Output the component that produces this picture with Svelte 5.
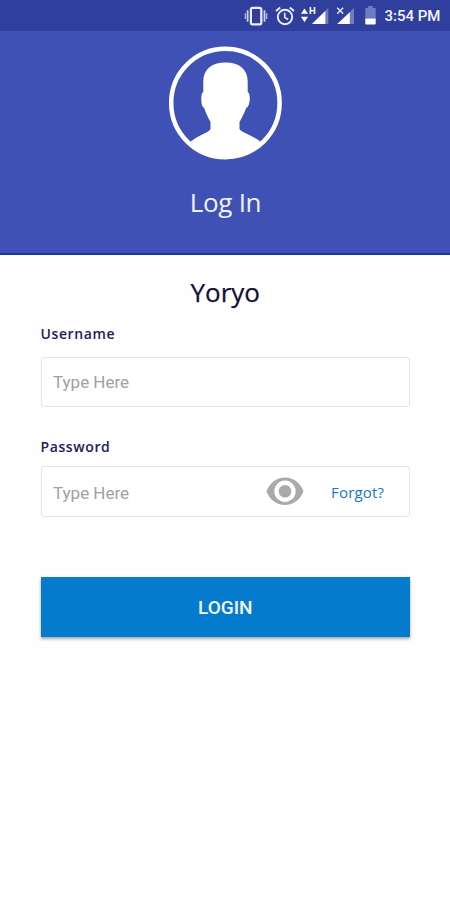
<script>
  let username = $state('');
  let password = $state('');
  let visible = $state(false);
</script>

<div class="screen">
  <div class="status">
    <svg class="vibrate" width="24" height="20" viewBox="0 0 24 20">
      <rect x="6.900" y="1.900" width="10.400" height="16.400" rx="1.600" fill="none" stroke="#eef0ff" stroke-width="2.200" />
      <path d="M3.600 4.200v11.600M20.500 4.200v11.600" stroke="#c9cff0" stroke-width="1.800" />
      <path d="M1.400 7.200v5.800M22.600 7.200v5.800" stroke="#aab2e2" stroke-width="1.400" />
    </svg>
    <svg class="alarm" width="20" height="20" viewBox="0 0 20 20" fill="none" stroke="#eef0ff">
      <circle cx="10" cy="11" r="7.200" stroke-width="1.900" />
      <path d="M9.700 6.700v4.700l3.500 2.100" stroke-width="1.500" />
      <path d="M1 5.100l4.200-3.500M19 5.100l-4.200-3.500" stroke-width="1.900" />
    </svg>
    <svg class="signal" width="28" height="19" viewBox="0 0 28 19">
      <path d="M0 7.700L3.500 2.400L7 7.700zM0 10.700L3.500 16.200L7 10.700z" fill="#fff" />
      <path d="M27.300 1.800V18H11z" fill="#6f7bc6" />
      <path d="M24.300 5V18H11z" fill="#fff" />
      <text x="7.900" y="8.200" fill="#fff" font-family="Roboto, sans-serif" font-size="9.500" font-weight="700">H</text>
    </svg>
    <svg class="nosignal" width="19" height="19" viewBox="0 0 19 19">
      <path d="M18 1.800V18H1.800z" fill="#6f7bc6" />
      <path d="M13.800 6.200V18H1.200z" fill="#fff" />
      <path d="M1.200 1.800l6 6M7.200 1.800l-6 6" stroke="#303f9f" stroke-width="3" />
      <path d="M1.200 1.800l6 6M7.200 1.800l-6 6" stroke="#e8ebff" stroke-width="1.400" />
    </svg>
    <svg class="battery" width="11" height="19" viewBox="0 0 11 19">
      <path d="M3.200 0h4.600v2h1.900q1 0 1 1v9.500H.3V3q0-1 1-1h1.900z" fill="#6f7bc0" />
      <path d="M.3 12.500h10.400v5.100q0 1-1 1H1.300q-1 0-1-1z" fill="#fff" />
    </svg>
    <span class="clock">3:54 PM</span>
  </div>

  <header>
    <svg width="114" height="114" viewBox="0 0 114 114">
      <circle cx="57.400" cy="57" r="54.200" fill="none" stroke="#fff" stroke-width="4.500" />
      <path fill="#fff" d="M57.500 16.500C43.500 16.500 35.300 23.500 35.300 35.500V46c-1.800.8-2 4-2 8 0 4 1 7 2.900 8 2 5.800 3.800 9.800 6.300 14V83c-1.500 3.500-11 5.500-20.500 13C31 106.500 43 112 57.400 112s26.600-5.500 35.600-16C83.500 88.500 73 86.500 71.500 83v-7c2.500-4.200 4.500-8.200 6.700-14 2-1 3.300-4 3.500-8 .2-4-.2-7.200-2-8V35.500C79.700 23.500 71.500 16.500 57.500 16.500z" />
    </svg>
    <h1>Log In</h1>
  </header>

  <main>
    <h2>Yoryo</h2>
    <label for="username">Username</label>
    <div class="field"><input id="username" placeholder="Type Here" bind:value={username} /></div>
    <label class="second" for="password">Password</label>
    <div class="field pass">
      <input id="password" type={visible ? 'text' : 'password'} placeholder="Type Here" bind:value={password} />
      <button class="eye" aria-label="Show password" onclick={() => (visible = !visible)}>
        <svg width="38" height="29" viewBox="0 0 38 29">
          <path fill="#aaa" fill-rule="evenodd" d="M19 .5C10.500 .5 3.500 6 .5 14.300 3.500 22.700 10.500 28 19 28s15.500-5.300 18.500-13.700C34.500 6 27.500 .5 19 .5zM19 3.600a10.700 10.700 0 1 1 0 21.400a10.700 10.700 0 1 1 0-21.400z" />
          <circle cx="19" cy="14.300" r="6.300" fill="#aaa" />
        </svg>
      </button>
      <a href="#forgot">Forgot?</a>
    </div>
    <button class="login">LOGIN</button>
  </main>
</div>

<style>
  :global(body) { margin: 0; background: #fff; }
  .screen { width: 450px; height: 900px; overflow: hidden; background: #fefefe; font-family: 'Open Sans', 'Noto Sans', sans-serif; }
  .status { height: 31px; box-sizing: border-box; padding: 6px 0 0 244px; background: #303e9e; display: flex; align-items: flex-start; }
  .status svg { flex: none; }
  .alarm { margin-left: 7px; }
  .signal { margin-left: 6px; }
  .nosignal { margin-left: 7px; }
  .battery { margin-left: 10px; }
  .clock { margin-left: 8.500px; font: 500 15px/21px Roboto, sans-serif; color: #f4f5ff; white-space: nowrap; }
  header { height: 224px; box-sizing: border-box; padding-top: 15px; background: #3f51b5; border-bottom: 2px solid #1c369c; display: flex; flex-direction: column; align-items: center; }
  header svg { flex: none; }
  h1 { margin: 25px 0 0 1px; font-size: 26px; line-height: 35px; font-weight: 400; letter-spacing: -0.3px; color: #f0f2ff; }
  main { padding: 20px 40px 0 40.500px; display: flex; flex-direction: column; }
  h2 { margin: 0; text-align: center; font-size: 26px; line-height: 35px; font-weight: 400; color: #101038; -webkit-text-stroke: 0.25px #101038; }
  label { margin-top: 14px; font-size: 14px; line-height: 20px; font-weight: 600; letter-spacing: 0.6px; color: #20205a; }
  .second { margin-top: 30px; }
  .field { height: 50px; margin-top: 13px; box-sizing: border-box; border: 1.500px solid #e2e4e6; border-radius: 3px; background: #fff; display: flex; align-items: center; }
  .pass { height: 51px; margin-top: 9px; }
  input { flex: 1; min-width: 0; margin: 0; padding: 0 0 0 11.500px; border: 0; outline: 0; background: none; font: 400 17px/24px Roboto, sans-serif; color: #333; }
  .pass input { padding-top: 2px; }
  input::placeholder { color: #a0a0a0; opacity: 1; }
  .eye { padding: 0; border: 0; background: none; width: 38px; height: 29px; margin: 0 27.500px 1px 0; }
  .eye svg { display: block; }
  a { width: 78px; font-size: 15px; line-height: 22px; font-weight: 500; letter-spacing: 0.2px; color: #1976cb; text-decoration: none; }
  .login { height: 60px; margin-top: 60px; padding: 2px 0 0; border: 0; background: #047bcd; color: #f2f8ff; font: 500 19px/24px Roboto, sans-serif; box-shadow: 0 2px 3px rgba(0, 0, 0, 0.35); }
</style>
